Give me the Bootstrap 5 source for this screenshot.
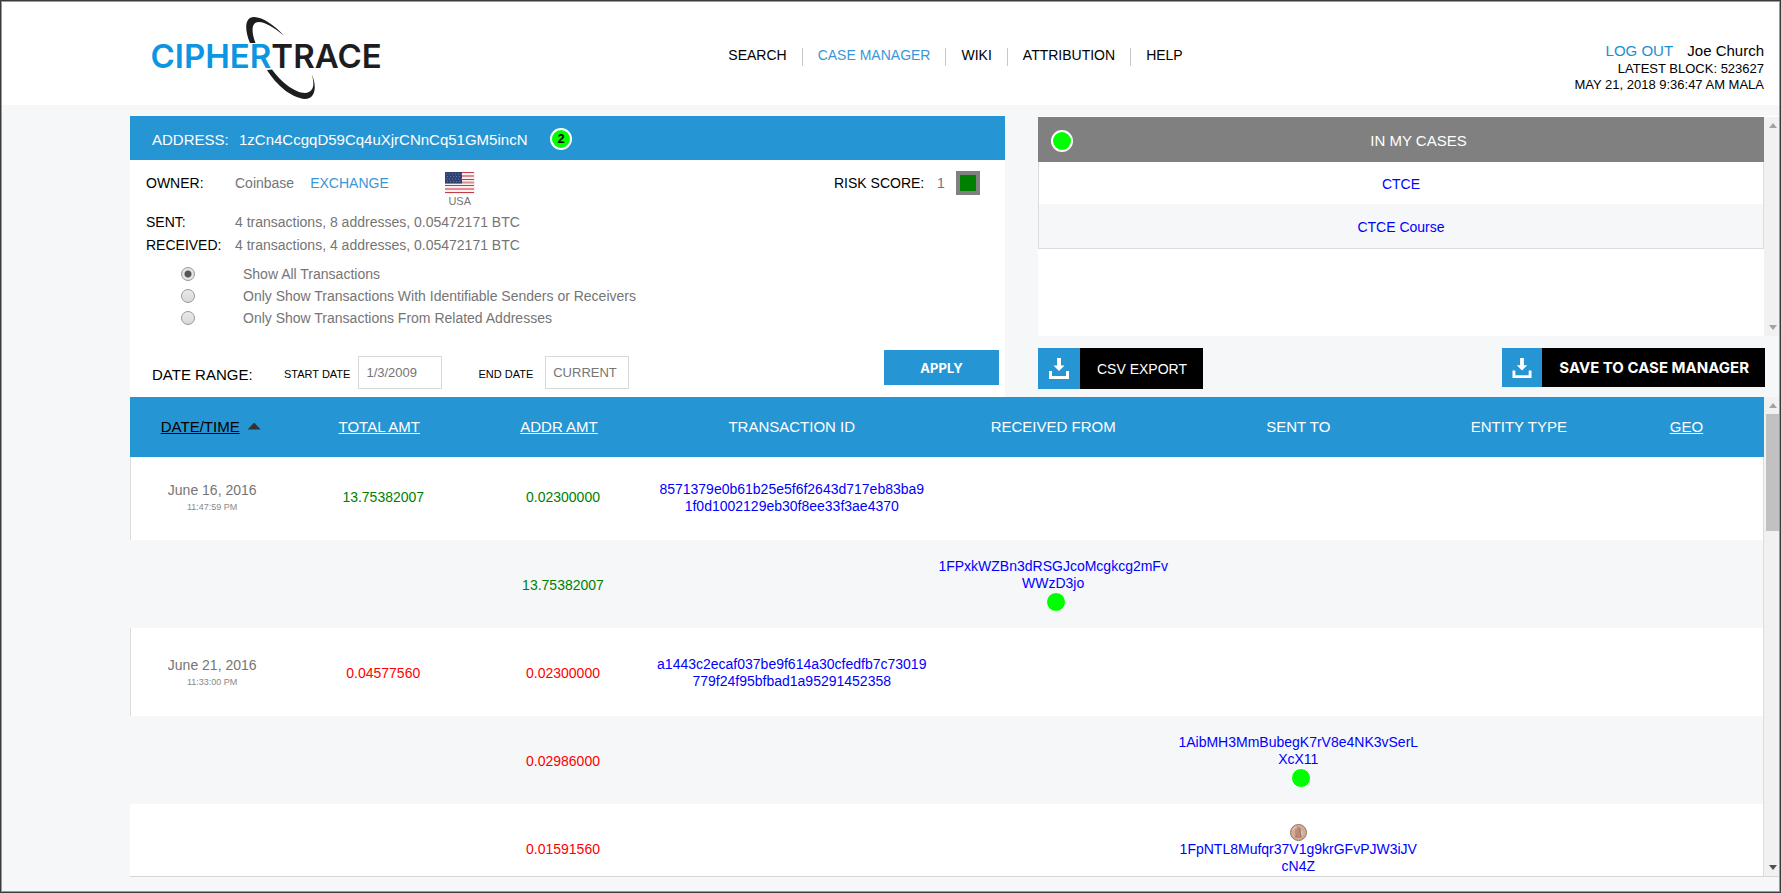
<!DOCTYPE html>
<html lang="en">
<head>
<meta charset="utf-8">
<meta name="viewport" content="width=device-width, initial-scale=1">
<title>CipherTrace – Case Manager</title>
<link rel="stylesheet" href="https://cdn.jsdelivr.net/npm/bootstrap@5.3.0/dist/css/bootstrap.min.css">
<style>
:root{--ct-blue:#2695d3;--ct-link:#3a96d8;--ct-bg:#f5f7f9;--ct-grey:#757575;--ct-line:#dcdcdf}
body{font-family:"Liberation Sans",Arial,sans-serif;font-size:14px;line-height:17px;color:#000;border:1px solid #3b3b3b}
.app-frame{border:1px solid #9a9a9a;background:var(--ct-bg)}
a{text-decoration:none}
.top-bar{background:#fff;height:103px;padding:0 15px 0 148px}
.side-slot{flex:1 1 0}
.brand-logo{display:block;width:232px;height:88px;margin-top:12px}
.main-nav{padding:46px 3px 0 0}
.main-nav a{display:block;padding:0 15px 4px;line-height:14px;color:#000;border-left:1px solid #c8c8c8}
.main-nav li:first-child a{border-left:0}
.main-nav a.active{color:var(--ct-link)}
.session{padding-top:39px;font-size:13px;line-height:16px}
.session .who{font-size:15px;line-height:20px}
.session .who a{margin-right:10px}
.session a{color:#1c8fd1}
.work-area{margin-left:128px;min-height:0}
.summary{display:grid;grid-template-columns:875fr 741fr;column-gap:33px;padding-top:11px}
.addr-head{background:var(--ct-blue);color:#fff;font-size:15px;height:44px;padding:2px 0 0 22px}
.addr-label{width:87px}
.addr-code{min-width:295px}
.dot{display:inline-block;border-radius:50%;background:#0f0;border:2px solid #fff;width:22px;height:22px;flex:none}
.dot-sm{width:20px;height:20px;border-width:1px;vertical-align:top;margin-left:6px}
.dot-count{color:#000;font:bold 13px/17px "Liberation Sans",Arial,sans-serif;text-align:center}
.owner-row{padding-top:11px;line-height:24px;min-height:51px}
.term{width:89px;flex:none;color:#000}
.grey{color:var(--ct-grey)}
.exchange{color:var(--ct-link)}
.flag-col{width:30px;font-size:11px;line-height:14px;padding-top:1px;margin-left:56px}
.risk-label{width:103px}
.risk-value{width:19px}
.risk-box{width:24px;height:24px;border:4px solid #808080;background:#008000;margin-right:25px}
.totals{line-height:23px}
.filters{line-height:22px;padding:6px 0 21px 35px}
.filters input{appearance:none;width:14px;height:14px;margin:0 48px 0 0;border:1px solid #999;border-radius:50%;background:linear-gradient(#e9e9e9,#d9d9d9);flex:none}
.filters input:checked{background:radial-gradient(circle,#555 0 3px,#e4e4e4 4px)}
.range-row{padding:0 6px 8px 22px;height:47px}
.range-row label,.range-row .range-title{line-height:29px;font-size:11px;white-space:nowrap}
.range-row .range-title{font-size:15px;width:132px}
.range-row .until-label{margin:0 12px 0 36px}
.range-row input{width:84px;height:33px;border:1px solid #d8d8d8;padding:0 7px;font-size:13px;color:var(--ct-grey);border-radius:0}
.act{border:0;border-radius:0;color:#fff;padding:0;display:flex;align-items:stretch}
.apply{background:var(--ct-blue);width:115px;height:35px;font:bold 13px "Inter",sans-serif}
.act .ico{background:var(--ct-blue);width:42px;display:flex;align-items:center;justify-content:center}
.act .cap{background:#000;padding:0 16px 0 17px;display:flex;align-items:center}
.csv-act .cap{padding-top:2px}
.save-act .ico{width:40px}
.save-act .cap{font:bold 15px "Inter",sans-serif}
.csv-act{height:41px}.save-act{height:39px}
.export-row{padding:12px 14px 0 0}
.cases{height:220px;border-top:1px solid #fff;background:#fff}
.cases-head{background:#808080;color:#fff;font-size:15px;height:45px;padding:2px 0 0 13px}
.cases-list{border:1px solid var(--ct-line);border-top:0}
.cases-list a{display:block;text-align:center;padding-top:2px;line-height:40px;color:#00f}
.cases-list li:nth-child(2){background:var(--ct-bg)}
.cases-list li:nth-child(2) a{line-height:42px}
.bar{width:15px;background:#f1f1f1;flex:none;padding:6px 0}
.bar i{display:block;width:8px;height:5px;margin-left:5px;background:#a3a3a3;clip-path:polygon(50% 0,100% 100%,0 100%)}
.bar i.down{clip-path:polygon(0 0,100% 0,50% 100%);margin-top:auto}
.bar i.live{background:#505050}
.bar .thumb{height:117px;background:#c1c1c1;margin:6px 0 0 2px}
.ledger{min-height:0;margin-bottom:14px;border-bottom:1px solid #d4d6d9}
.ledger-view{min-width:0;overflow:hidden}
.ledger-table{width:100%;table-layout:fixed;border-collapse:separate;border-spacing:0;text-align:center}
.ledger-table th{background:var(--ct-blue);color:#fff;font-size:15px;font-weight:400;height:60px;padding:0 0 2px}
.ledger-table th.sortable{padding-right:8px}
.ledger-table th.sortable:first-child,.ledger-table th.sortable:last-child{padding-right:2px}
.ledger-table th:last-child.sortable{padding-right:8px}
.ledger-table th a{color:#fff;text-decoration:underline}
.ledger-table th a.sorted{color:#000}
.ledger-table th .caret{display:inline-block;width:13px;height:7px;background:#333;clip-path:polygon(50% 0,100% 100%,0 100%);margin-left:8px;vertical-align:2px}
.ledger-table td{height:88px;padding:2px 0 0}
.ledger-table tbody tr{background:#fff}
.ledger-table tbody tr:nth-child(even){background:var(--ct-bg)}
.ledger-table tbody tr:first-child td{height:83px;padding-bottom:4px}
.ledger-table tbody td.grey{padding-top:4px}
.ledger-table td:last-child{border-right:1px solid var(--ct-line)}
.ledger-table tr.tx td:first-child{border-left:1px solid var(--ct-line)}
.ledger-table td a{color:#00f}
.ledger-table small{display:block;font-size:9px;line-height:17px;color:#8a8a8a}
.credit{color:#008000}.debit{color:#f00}
.w-date{width:10%}.w-total{width:11%}.w-addr{width:11%}.w-tx{width:17%}.w-from{width:15%}.w-to{width:15%}.w-type{width:12%}
</style>
</head>
<body class="vh-100 overflow-hidden">
<div class="app-frame h-100 d-flex flex-column">
  <header class="top-bar d-flex flex-shrink-0">
    <div class="side-slot d-flex align-items-start">
      <a href="#" aria-label="CipherTrace">
        <svg class="brand-logo" viewBox="150 14 232 88">
          <path fill="#1d1d1f" d="M250 43C244 29 245 17 254 17C263 17 275 26 284 35.500C272 26 262 20 256 22.500C251 25 252 34 255.500 43ZM267 70L272 69.500C281 82 295 93 305 93C314 92 315 84 311.500 74C317 85 316 99 305 99C292 98 277 86 267 70Z"/>
          <text x="150.500" y="68" font-family="Inter, sans-serif" font-size="33" font-weight="600"><tspan fill="#0c95e0">CIPHER</tspan><tspan fill="#1d1d1f">TRACE</tspan></text>
        </svg>
      </a>
    </div>
    <nav class="main-nav">
      <ul class="list-unstyled d-flex m-0">
        <li><a href="#">SEARCH</a></li>
        <li><a href="#" class="active">CASE MANAGER</a></li>
        <li><a href="#">WIKI</a></li>
        <li><a href="#">ATTRIBUTION</a></li>
        <li><a href="#">HELP</a></li>
      </ul>
    </nav>
    <div class="side-slot session text-end">
      <div class="who"><a href="#">LOG OUT</a> <span>Joe Church</span></div>
      <div>LATEST BLOCK: 523627</div>
      <div>MAY 21, 2018 9:36:47 AM MALA</div>
    </div>
  </header>

  <main class="work-area flex-fill d-flex flex-column">
    <div class="summary">
      <section class="bg-white">
        <div class="addr-head d-flex align-items-center">
          <span class="addr-label">ADDRESS:</span><span class="addr-code">1zCn4CcgqD59Cq4uXjrCNnCq51GM5incN</span>
          <span class="dot dot-count ms-3">2</span>
        </div>
        <div class="owner-row d-flex ps-3">
          <span class="term">OWNER:</span>
          <span class="grey">Coinbase</span>
          <a href="#" class="ms-3 exchange">EXCHANGE</a>
          <div class="flag-col grey text-center me-auto">
            <svg class="d-block" width="30" height="22" viewBox="0 0 30 22" role="img" aria-label="US flag">
              <rect width="30" height="22" fill="#f8eff0"/>
              <path d="M0 .500H29M0 7.500H29M0 13.500H29M0 20.500H29" stroke="#c43c47" stroke-width="1.200"/>
              <path d="M0 4H29M0 10.500H29M0 17H29" stroke="#dd8d93" stroke-width="2"/>
              <rect width="17" height="11.500" fill="#2f4372"/>
              <path d="M1 2H17M2 4.500H17M1 7H17M2 9.500H17" stroke="#6678a5" stroke-dasharray="1 2"/>
            </svg>USA
          </div>
          <span class="risk-label">RISK SCORE:</span><span class="grey risk-value">1</span>
          <span class="risk-box"></span>
        </div>
        <div class="totals ps-3">
          <div class="d-flex"><span class="term">SENT:</span><span class="grey">4 transactions, 8 addresses, 0.05472171 BTC</span></div>
          <div class="d-flex"><span class="term">RECEIVED:</span><span class="grey">4 transactions, 4 addresses, 0.05472171 BTC</span></div>
        </div>
        <div class="filters grey ms-3">
          <div class="d-flex align-items-center"><input type="radio" name="show" id="all" checked><label for="all">Show All Transactions</label></div>
          <div class="d-flex align-items-center"><input type="radio" name="show" id="ident"><label for="ident">Only Show Transactions With Identifiable Senders or Receivers</label></div>
          <div class="d-flex align-items-center"><input type="radio" name="show" id="related"><label for="related">Only Show Transactions From Related Addresses</label></div>
        </div>
        <div class="range-row d-flex align-items-end">
          <span class="range-title">DATE RANGE:</span>
          <label for="from" class="me-2">START DATE</label><input id="from" type="text" value="1/3/2009">
          <label for="until" class="until-label">END DATE</label><input id="until" type="text" value="CURRENT">
          <button type="button" class="btn apply act ms-auto align-self-start align-items-center justify-content-center">APPLY</button>
        </div>
      </section>

      <section>
        <div class="cases d-flex">
          <div class="flex-fill">
            <div class="cases-head d-flex align-items-center"><span class="dot"></span><span class="flex-fill text-center">IN MY CASES</span></div>
            <ul class="cases-list list-unstyled m-0">
              <li><a href="#">CTCE</a></li>
              <li><a href="#">CTCE Course</a></li>
            </ul>
          </div>
          <div class="bar d-flex flex-column"><i></i><i class="down"></i></div>
        </div>
        <div class="export-row d-flex justify-content-between align-items-start">
          <button type="button" class="act csv-act">
            <span class="ico"><svg width="20" height="21" viewBox="0 0 20 21" fill="#fff"><path d="M8 0H12V7.500H15.500L10 13L4.500 7.500H8ZM0 13H3V18H17V13H20V21H0Z"/></svg></span><span class="cap">CSV EXPORT</span>
          </button>
          <button type="button" class="act save-act">
            <span class="ico"><svg width="20" height="20" viewBox="0 0 20 21" fill="#fff"><path d="M8 0H12V7.500H15.500L10 13L4.500 7.500H8ZM0 13H3V18H17V13H20V21H0Z"/></svg></span><span class="cap">SAVE TO CASE MANAGER</span>
          </button>
        </div>
      </section>
    </div>

    <section class="ledger d-flex flex-fill">
      <div class="ledger-view flex-fill">
        <table class="ledger-table">
          <colgroup><col class="w-date"><col class="w-total"><col class="w-addr"><col class="w-tx"><col class="w-from"><col class="w-to"><col class="w-type"><col></colgroup>
          <thead>
            <tr>
              <th class="sortable"><a href="#" class="sorted">DATE/TIME</a><span class="caret"></span></th>
              <th class="sortable"><a href="#">TOTAL AMT</a></th>
              <th class="sortable"><a href="#">ADDR AMT</a></th>
              <th>TRANSACTION ID</th>
              <th>RECEIVED FROM</th>
              <th>SENT TO</th>
              <th>ENTITY TYPE</th>
              <th class="sortable"><a href="#">GEO</a></th>
            </tr>
          </thead>
          <tbody>
            <tr class="tx">
              <td class="grey">June 16, 2016<small>11:47:59 PM</small></td>
              <td class="credit">13.75382007</td>
              <td class="credit">0.02300000</td>
              <td><a href="#">8571379e0b61b25e5f6f2643d717eb83ba9<br>1f0d1002129eb30f8ee33f3ae4370</a></td>
              <td></td><td></td><td></td><td></td>
            </tr>
            <tr>
              <td></td><td></td>
              <td class="credit">13.75382007</td>
              <td></td>
              <td><a href="#">1FPxkWZBn3dRSGJcoMcgkcg2mFv<br>WWzD3jo</a><br><span class="dot dot-sm"></span></td>
              <td></td><td></td><td></td>
            </tr>
            <tr class="tx">
              <td class="grey">June 21, 2016<small>11:33:00 PM</small></td>
              <td class="debit">0.04577560</td>
              <td class="debit">0.02300000</td>
              <td><a href="#">a1443c2ecaf037be9f614a30cfedfb7c73019<br>779f24f95bfbad1a95291452358</a></td>
              <td></td><td></td><td></td><td></td>
            </tr>
            <tr>
              <td></td><td></td>
              <td class="debit">0.02986000</td>
              <td></td><td></td>
              <td><a href="#">1AibMH3MmBubegK7rV8e4NK3vSerL<br>XcX11</a><br><span class="dot dot-sm"></span></td>
              <td></td><td></td>
            </tr>
            <tr>
              <td></td><td></td>
              <td class="debit">0.01591560</td>
              <td></td><td></td>
              <td>
                <svg class="d-block mx-auto" width="17" height="17" viewBox="0 0 17 17"><circle cx="8.500" cy="8.500" r="8" fill="#d3ab98" stroke="#8d7466"/><path d="M7 3Q10 2 10 5L11 8L10 10L12 14H5L7 9Z" fill="#bb8b78"/><path d="M6 5V13M10 4V8L11 13" stroke="#94695a" stroke-width=".800" fill="none"/><path d="M3 6Q4 3 6 2.500M12 7V11" stroke="#ecd0bf" fill="none"/></svg>
                <a href="#">1FpNTL8Mufqr37V1g9krGFvPJW3iJV<br>cN4Z</a>
              </td>
              <td></td><td></td>
            </tr>
          </tbody>
        </table>
      </div>
      <div class="bar d-flex flex-column"><i></i><div class="thumb"></div><i class="down live"></i></div>
    </section>
  </main>
</div>
<script src="https://cdn.jsdelivr.net/npm/bootstrap@5.3.0/dist/js/bootstrap.bundle.min.js"></script>
</body>
</html>
